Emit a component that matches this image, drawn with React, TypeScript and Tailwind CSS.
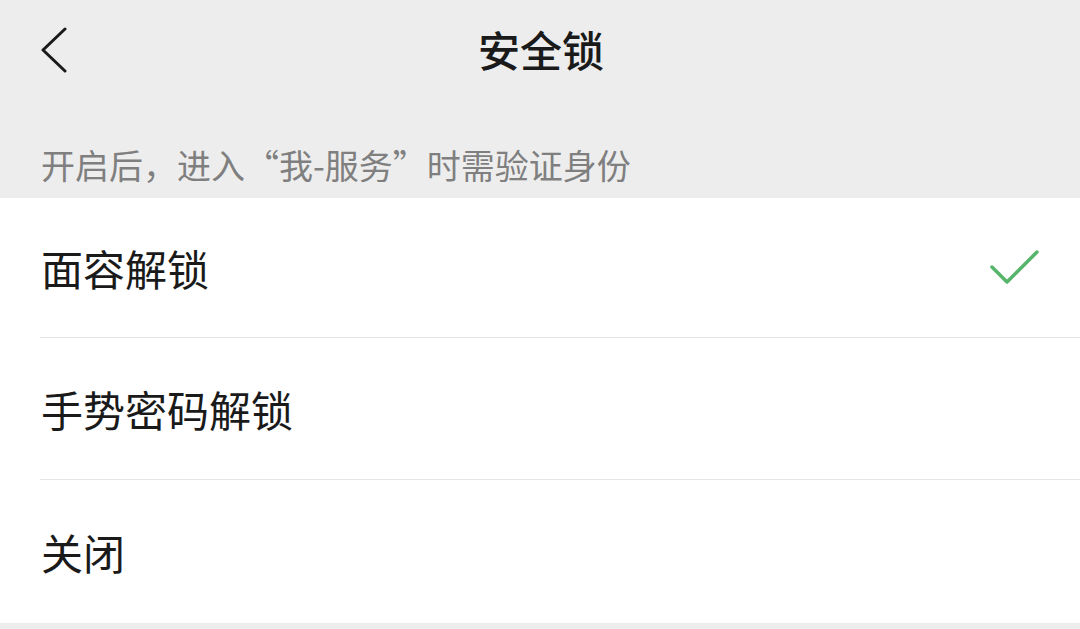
import React from "react";

const options = [
  { label: "面容解锁", checked: true },
  { label: "手势密码解锁", checked: false },
  { label: "关闭", checked: false },
];

function BackIcon() {
  return (
    <svg width="26" height="46" viewBox="0 0 26 46" fill="none">
      <polyline
        points="24,2 2,23 24,44"
        stroke="#1a1a1a"
        strokeWidth="3"
        strokeLinecap="round"
        strokeLinejoin="round"
      />
    </svg>
  );
}

function CheckIcon() {
  return (
    <svg width="52" height="36" viewBox="0 0 52 36" fill="none">
      <polyline
        points="4,17 19,32 49,2"
        stroke="#56b46b"
        strokeWidth="3.5"
        strokeLinecap="round"
        strokeLinejoin="round"
      />
    </svg>
  );
}

export default function App() {
  return (
    <div
      className="flex h-[629px] w-[1080px] flex-col overflow-hidden bg-[#ededed]"
      style={{ fontFamily: '"Noto Sans CJK SC", "Noto Sans", sans-serif' }}
    >
      <header className="grid h-[98px] grid-cols-[1fr_auto_1fr] items-center">
        <div className="pl-[41px] pt-[2px]">
          <BackIcon />
        </div>
        <h1 className="pl-[2px] text-[42px] font-medium leading-none text-[#1a1a1a]">安全锁</h1>
        <div />
      </header>

      <div className="flex h-[100px] items-end pb-[13px] pl-[41px]">
        <p className="text-[34px] leading-[40px] text-[#7f7f7f]">
          开启后，进入“我-服务”时需验证身份
        </p>
      </div>

      <ul className="bg-white">
        <li className="flex h-[139px] items-center justify-between pl-[41px] pr-[40px]">
          <span className="text-[42px] leading-none text-[#1a1a1a]">{options[0].label}</span>
          <CheckIcon />
        </li>
        <li className="ml-[40px] h-px bg-[#e5e5e5]" />
        <li className="flex h-[141px] items-center pl-[41px]">
          <span className="text-[42px] leading-none text-[#1a1a1a]">{options[1].label}</span>
        </li>
        <li className="ml-[40px] h-px bg-[#e5e5e5]" />
        <li className="flex h-[143px] items-center pl-[41px]">
          <span className="text-[42px] leading-none text-[#1a1a1a]">{options[2].label}</span>
        </li>
      </ul>
    </div>
  );
}
